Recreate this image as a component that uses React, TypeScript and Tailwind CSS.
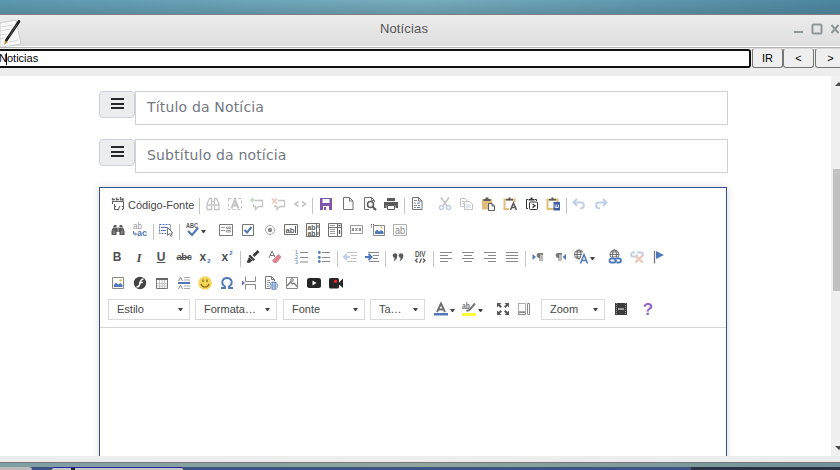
import type { ReactNode } from 'react';

const D = '#5a5a5a';
const B = '#5079b8';

type IconProps = { m: string; children: ReactNode; faded?: boolean };

function Ico({ m, children, faded }: IconProps) {
  return (
    <svg
      viewBox="0 0 16 16"
      fill="none"
      stroke={D}
      strokeWidth="1"
      className={`h-4 w-4 shrink-0 overflow-visible ${m} ${faded ? 'opacity-35' : ''}`}
    >
      {children}
    </svg>
  );
}

type LabelProps = { x: number; y: number; w: number; size: number; color?: string; bold?: boolean; children: string };

function Label({ x, y, w, size, color = D, bold, children }: LabelProps) {
  return (
    <text
      x={x}
      y={y}
      fontSize={size}
      fontWeight={bold ? 700 : 400}
      fill={color}
      stroke="none"
      textLength={w}
      lengthAdjust="spacingAndGlyphs"
      fontFamily="Liberation Sans"
    >
      {children}
    </text>
  );
}

function Glyph({ m, children }: { m: string; children: ReactNode }) {
  return (
    <span className={`flex h-4 w-4 shrink-0 items-center justify-center whitespace-nowrap leading-none text-[#505050] ${m}`}>
      {children}
    </span>
  );
}

function Sep({ m }: { m: string }) {
  return <span className={`mt-0.5 h-4 w-px shrink-0 bg-[#c4c4c4] ${m}`} />;
}

function Caret({ m }: { m: string }) {
  return (
    <span className={`mt-2 h-0 w-[5px] shrink-0 border-x-[2.5px] border-t-[3px] border-x-transparent border-t-[#444] ${m}`} />
  );
}

function Combo({ m, label }: { m: string; label: string }) {
  return (
    <div className={`flex h-[21px] shrink-0 items-center justify-between border border-[#d9d9d9] pr-[6px] pl-2 text-[11px] text-[#484848] ${m}`}>
      <span>{label}</span>
      <span className="h-0 w-[5px] border-x-[2.5px] border-t-[3px] border-x-transparent border-t-[#444]" />
    </div>
  );
}

function Binoculars() {
  return (
    <>
      <path d="M1.500 13V9L4 3h2.500v10zM14.500 13V9L12 3H9.500v10z" fill={D} stroke="none" />
      <path d="M6 5.500h4v4.500H6z" fill={D} stroke="none" />
      <path d="M4 8.500V12M12 8.500V12M8 6v4M3 5.500h10" stroke="#fff" strokeWidth=".5" />
    </>
  );
}

function Clipboard({ color }: { color: string }) {
  return (
    <>
      <path d="M2.500 3.500v9.500h10V3.500z" stroke={color} strokeWidth="2" />
      <path d="M4 4.500V3h2.500V1.500h2V3H11v1.500z" fill={D} stroke="none" />
    </>
  );
}

function Undo({ flip }: { flip?: boolean }) {
  return (
    <g transform={flip ? 'matrix(-1 0 0 1 16 0)' : undefined} stroke={B} strokeWidth="2">
      <path d="M3 6.500h7c4 0 4 6-1 6" />
      <path d="M6 3L2.500 6.500 6 10" />
    </g>
  );
}

function Globe() {
  return (
    <g strokeWidth=".9">
      <circle cx="6" cy="5.500" r="4.500" />
      <ellipse cx="6" cy="5.500" rx="2" ry="4.500" />
      <path d="M1.500 5.500h9M2.500 3h7M2.500 8h7" />
    </g>
  );
}

function Pilcrow() {
  return <path d="M8.500 4H13v1.500h-.500V12h-1V5.500h-1V12h-1V9C6 9 6 4 8.500 4z" fill="#777" stroke="none" />;
}

function RowSource() {
  return (
    <div className="mt-2 flex h-4">
      <Ico m="ml-[11px]">
        <path d="M1.500 5.500V8M3.500 8v5.500H7M12.500 5.500v7.500H11M1 5.500h11.500" stroke="#666" />
        <path d="M1 3.500h3M5 3.500h3M9 3.500h3M1.500 2v2.500M5.500 1.500v3M9.500 1v3.500M12 2v3" stroke="#666" strokeWidth="1.300" />
        <path d="M5 10l-2 2 2 2M11 10l2 2-2 2M9 10l-2 4.500" />
      </Ico>
      <span className="ml-px w-[66px] shrink-0 pt-px text-[11px] leading-4 tracking-[-0.03px] whitespace-nowrap text-[#484848]">Código-Fonte</span>
      <Sep m="ml-[5px]" />
      <Ico m="ml-[5px]" faded>
        <path d="M2 13.500V8l2.500-5.500h2v11zM9.500 13.500v-11h2L14 8v5.500zM6.500 5.500h3M6.500 9h3M2 9h4.500M9.500 9H14" strokeWidth="1.300" />
      </Ico>
      <Ico m="ml-1.5" faded>
        <path d="M1.500 2.500h13v11h-13z" strokeDasharray="3 2" />
        <path d="M4.500 12.500L8 4l3.500 8.500M5.500 9.500h5" strokeWidth="2" />
      </Ico>
      <Ico m="ml-1.5" faded>
        <path d="M6 4.500h7.500v6H9.500l-3 3v-3h-2V8" strokeWidth="1.300" />
        <path d="M3.500 1.500v5M1 4h5" stroke="#4c9a3b" strokeWidth="1.600" />
      </Ico>
      <Ico m="ml-[5px]" faded>
        <path d="M8 4.500h6.500v6H10l-3 3v-3H5V9" strokeWidth="1.300" />
        <path d="M2 2.500l5 5M7 2.500l-5 5" stroke="#d45b38" strokeWidth="1.600" />
      </Ico>
      <Ico m="ml-1.5" faded>
        <path d="M6.500 5.500L3 8l3.500 2.500M10 5.500L13.500 8 10 10.500" strokeWidth="1.800" />
      </Ico>
      <Sep m="ml-1" />
      <Ico m="ml-[5px]">
        <path d="M2 2h12v12H2z" fill="#7f55ad" stroke="none" />
        <path d="M4.500 3h7v4h-7zM5 10h6v4H5z" fill="#fff" stroke="none" />
        <path d="M6 11h2v3H6z" fill="#7f55ad" stroke="none" />
      </Ico>
      <Ico m="ml-1.5"><path d="M3.500 1.500h6l3.500 3.500v8.500H3.500zM9.500 1.500V5H13" stroke="#707070" /></Ico>
      <Ico m="ml-1.5">
        <path d="M12.500 6V4.500l-3-3h-7v12H7M9.500 1.500v3h3M11.500 13.500h1" stroke="#707070" />
        <circle cx="8.500" cy="8.500" r="3" strokeWidth="1.500" />
        <path d="M10.500 10.500l3.500 3.500" strokeWidth="2" />
      </Ico>
      <Ico m="ml-[5px]">
        <path d="M1 6h14v6h-2.500V9.500h-9V12H1zM4 2h8v3H4z" fill={D} stroke="none" />
        <path d="M4.500 9.500h7v4h-7z" fill="#fff" />
      </Ico>
      <Sep m="ml-[5px]" />
      <Ico m="ml-1">
        <path d="M3.500 1.500h6l3.500 3.500v8.500H3.500zM9.500 1.500V5H13" stroke="#707070" />
        <path d="M5 4.500h3M5 7h2M5 9.500h3M5 11.500h2M9 9.500h2" stroke="#888" />
        <path d="M8 7h3M8 11.500h3" stroke={B} />
      </Ico>
      <Ico m="ml-3" faded>
        <path d="M4 1.500l6.500 9M12 1.500l-6.500 9" strokeWidth="1.600" />
        <circle cx="4.500" cy="11.500" r="2" stroke={B} strokeWidth="1.600" />
        <circle cx="11.500" cy="11.500" r="2" stroke={B} strokeWidth="1.600" />
      </Ico>
      <Ico m="ml-[5px]" faded>
        <path d="M6 10.500H2.500v-8H7L9 5M6.500 5.500h5l3 2.500v5.500h-8zM4 5.500h2M4 7.500h2" />
        <path d="M8 9h5M8 11h5" stroke={B} />
      </Ico>
      <Ico m="ml-1.5">
        <path d="M2 3h10v10.500H2z" fill="#dfbd7b" stroke="none" />
        <path d="M3.500 5V3h2V1.500h3V3h2v2z" fill={D} stroke="none" />
        <path d="M8.500 7.500H12l2.500 2.500v4.500h-6z" fill="#fff" />
        <path d="M12 7.500V10h2.500" />
      </Ico>
      <Ico m="ml-1.5">
        <Clipboard color="#dfbd7b" />
        <path d="M7 6h8v9H7z" fill="#fff" stroke="none" />
        <path d="M8.500 14L11.500 7l3 7M9.500 11.500h4" strokeWidth="1.600" />
      </Ico>
      <Ico m="ml-1.500 ml-1.5">
        <path d="M4 12.500H2.500v-9H4M11 3.500h1.500V5" stroke="#333" />
        <rect x="5.500" y="6" width="8" height="7.500" rx="1" stroke="#333" />
        <path d="M4.500 4.500V3h2V1.500h2V3h2v1.500z" fill="#333" stroke="none" />
        <path d="M8.500 8l2.500 1.800-2.500 1.800" stroke="#333" strokeWidth="1.300" />
      </Ico>
      <Ico m="ml-[5px]">
        <Clipboard color="#dfbd7b" />
        <path d="M8.500 6H15v8.500H8.500z" fill="#3c5ea4" stroke="none" />
        <path d="M10 8.500v3h3.500v-3M11.700 8.500v3" stroke="#fff" strokeWidth=".8" />
      </Ico>
      <Sep m="ml-[5px]" />
      <Ico m="ml-1" faded><Undo /></Ico>
      <Ico m="ml-1.5" faded><Undo flip /></Ico>
    </div>
  );
}

function RowForms() {
  return (
    <div className="mt-2.5 flex h-4">
      <Ico m="ml-2.5"><Binoculars /></Ico>
      <Ico m="ml-1.5">
        <Label x={1} y={7} w={9} size={9} color="#999">ab</Label>
        <Label x={5} y={14} w={10} size={9} color="#5079b8" bold>ac</Label>
        <path d="M1.500 9v3H4M3 10.500l1.500 1.500L3 13.500" stroke={B} />
      </Ico>
      <Sep m="ml-[5px]" />
      <Ico m="ml-1">
        <path d="M1.500 2.500h11v9H1.500z" stroke={B} strokeDasharray="2 1" />
        <path d="M3 5.500h6M3 8.500h5" stroke={B} />
        <path d="M9.500 5.500v8l2-2 1.500 3 1-1-1-2.500h2z" fill="#fff" stroke="#777" />
      </Ico>
      <Sep m="ml-[5px]" />
      <Ico m="ml-[5px]">
        <Label x={1} y={6} w={12} size={7} bold>ABC</Label>
        <path d="M3 9l4 4 6-7" stroke={B} strokeWidth="2.200" />
      </Ico>
      <Caret m="" />
      <Ico m="ml-3">
        <path d="M1.500 2.500h13v11h-13z" stroke="#777" />
        <path d="M3 5.500h4M3 8.500h4M8.500 5h4v1.500h-4zM8.500 8.500h4V10h-4z" stroke="#999" />
      </Ico>
      <Ico m="ml-1.5">
        <path d="M2.500 2.500h11v11h-11z" stroke="#777" />
        <path d="M4.500 8l2.500 2.500 4.500-5.500" stroke={B} strokeWidth="2" />
      </Ico>
      <Ico m="ml-1.5">
        <circle cx="8" cy="8" r="4.500" stroke="#aaa" />
        <circle cx="8" cy="8" r="2.200" fill="#888" stroke="none" />
      </Ico>
      <Ico m="ml-[5px]">
        <path d="M1.500 2.500h13v10h-13z" stroke="#707070" />
        <Label x={2.5} y={10.5} w={9} size={8} bold>ab</Label>
        <path d="M12.500 4v7" />
      </Ico>
      <Ico m="ml-1.5">
        <path d="M1.500 1.500h13v13h-13zM11.500 2v12" stroke="#707070" />
        <Label x={2.5} y={7.5} w={8} size={7} bold>ab</Label>
        <Label x={2.5} y={13.5} w={8} size={7} bold>ab</Label>
        <path d="M13 3v3M13 10v3" />
      </Ico>
      <Ico m="ml-1.5">
        <path d="M1.500 1.500h13v13h-13zM1.500 5.500h13M10.500 2v12" stroke="#707070" />
        <path d="M3 3.500h5M3 7.500h5M3 9.500h5M3 11.500h5" stroke="#999" />
        <path d="M11.500 3.500h2M12.500 8v4" strokeWidth="1.300" />
      </Ico>
      <Ico m="ml-[5px]">
        <path d="M2.500 3.500h12v8h-12z" stroke="#999" />
        <path d="M4 6l2 3M6 6l-2 3M7.500 6l2 3M9.500 6l-2 3M11 6l2 3M13 6l-2 3" stroke="#777" />
      </Ico>
      <Ico m="ml-1.5">
        <path d="M3.500 3.500h11v10h-11z" stroke="#888" />
        <path d="M1 2.500h4M1.500 5.500v-3" strokeDasharray="1 1" />
        <path d="M5 12V9.500l2-2 2 2L11.500 8l2 2v2z" fill={B} stroke="none" />
        <circle cx="11.500" cy="5.500" r="1" fill="#e4b363" stroke="none" />
      </Ico>
      <Ico m="ml-1.5">
        <path d="M1.500 2.500h13v11h-13z" stroke="#b0b0b0" />
        <Label x={3} y={11.5} w={10} size={10} color="#888">ab</Label>
      </Ico>
    </div>
  );
}

function RowText() {
  return (
    <div className="mt-[11px] flex h-4">
      <Glyph m="ml-[9px]"><b className="text-[12px]">B</b></Glyph>
      <Glyph m="ml-1.5"><i className="font-['Liberation_Serif'] text-[13px] font-bold">I</i></Glyph>
      <Glyph m="ml-1.5"><b className="text-[12px] underline">U</b></Glyph>
      <Glyph m="ml-[7px]"><span className="text-[9.5px] font-semibold tracking-[-.5px] line-through">abc</span></Glyph>
      <Glyph m="ml-[5px]"><b className="text-[12px]">x</b><b className="mt-2 ml-px text-[6px] text-[#4a74b8]">2</b></Glyph>
      <Glyph m="ml-1.5"><b className="text-[12px]">x</b><b className="mb-2 ml-px text-[6px] text-[#4a74b8]">2</b></Glyph>
      <Sep m="ml-[5px]" />
      <Ico m="ml-1">
        <path d="M13.500 2l-5 5" strokeWidth="2.800" stroke="#3c3c3c" />
        <path d="M5 5.500l5 5L8.500 12l-5-5z" fill="#3c3c3c" stroke="none" />
        <path d="M4 8l3.500 3.500-3 2.500-3-.500z" fill="#3c3c3c" stroke="none" />
      </Ico>
      <Ico m="ml-1.5">
        <path d="M2 9l3-7 3 6M3 6.500h4" stroke="#777" />
        <path d="M11.500 5l3 3-5 6H7l-2-2.500z" fill="#dc8493" stroke="none" />
      </Ico>
      <Ico m="ml-[11px]">
        <path d="M6 3.500h8M6 8.500h8M6 13h8" stroke="#888" />
        <Label x={1} y={5} w={3} size={6} color={B}>1</Label>
        <Label x={1} y={10} w={3} size={6} color={B}>2</Label>
        <Label x={1} y={15} w={3} size={6} color={B}>3</Label>
      </Ico>
      <Ico m="ml-1.5">
        <path d="M6 3.500h8M6 8.500h8M6 12.500h8" stroke="#888" />
        <g fill={B} stroke="none">
          <circle cx="3.300" cy="3.500" r="1.400" /><circle cx="3.300" cy="8.500" r="1.400" /><circle cx="3.300" cy="12.500" r="1.400" />
        </g>
      </Ico>
      <Sep m="ml-[5px]" />
      <Ico m="ml-1" faded>
        <path d="M5 3.500h10M9 6.500h6M9 9.500h5M5 12.500h10" />
        <path d="M2 8h6M5 5L2 8l3 3" stroke={B} strokeWidth="2" />
      </Ico>
      <Ico m="ml-1.5">
        <path d="M4 3.500h11M9 6.500h6M9 9.500h5M5 12.500h10" stroke="#888" />
        <path d="M1 8h6M4.500 5l3 3-3 3" stroke={B} strokeWidth="2" />
      </Ico>
      <Sep m="ml-[5px]" />
      <Ico m="ml-1">
        <g fill={D} stroke="none">
          <circle cx="5" cy="6.500" r="2.300" /><circle cx="11" cy="6.500" r="2.300" />
          <path d="M7.300 6.500c0 3-1.500 5-4 6 1-1.500 1.500-2.500 1-4zM13.300 6.500c0 3-1.500 5-4 6 1-1.500 1.500-2.500 1-4z" />
        </g>
      </Ico>
      <Ico m="ml-1.5">
        <Label x={3} y={8} w={10.5} size={8.5} bold>DIV</Label>
        <path d="M5.500 9.500L3.500 11.500l2 2M11 9.500l2 2-2 2M9.500 9.500L7.500 14" strokeWidth="1.300" />
      </Ico>
      <Sep m="ml-[5px]" />
      <Ico m="ml-1"><path d="M2 3.500h12M2 6.500h8M2 9.500h12M2 12.500h8" stroke="#888" /></Ico>
      <Ico m="ml-1.5"><path d="M2 3.500h12M4 6.500h8M2 9.500h12M4 12.500h8" stroke="#888" /></Ico>
      <Ico m="ml-1.5"><path d="M2 3.500h12M6 6.500h8M2 9.500h12M6 12.500h8" stroke="#888" /></Ico>
      <Ico m="ml-1.5"><path d="M2 3.500h12M2 6.500h12M2 9.500h12M2 12.500h12" stroke="#888" /></Ico>
      <Sep m="ml-[5px]" />
      <Ico m="ml-1">
        <Pilcrow />
        <path d="M2.500 5v6L6 8z" fill={B} stroke="none" />
      </Ico>
      <Ico m="ml-1.5">
        <g transform="translate(-3 0)"><Pilcrow /></g>
        <path d="M14 5v6l-3.500-3z" fill={B} stroke="none" />
      </Ico>
      <Ico m="ml-[5px]">
        <Globe />
        <path d="M7 14.500l3.500-9 3.500 9M8.500 11.500h4.500" stroke="#fff" strokeWidth="3" />
        <path d="M7.500 14.500l3.500-9 3.500 9M8.500 11.500h5" stroke={B} strokeWidth="1.500" />
      </Ico>
      <Caret m="ml-px" />
      <Ico m="ml-3">
        <g transform="translate(1.500 0)"><Globe /></g>
        <path d="M1 8.500h14V15H1z" fill="#fff" stroke="none" />
        <g stroke={B} strokeWidth="1.800">
          <path d="M7.500 9.500H4.500a2 2 0 000 4H7c2 0 2-2.500 2-2.500M9.500 13.500h2.500a2 2 0 000-4H9.500C8 9.500 7.500 11.500 7.500 11.500" />
        </g>
      </Ico>
      <Ico m="ml-1.5" faded>
        <path d="M6 3.500H4a2 2 0 000 4h2.500c2 0 1.500-2 1.500-2M8 3.500h4a2 2 0 010 4" stroke={B} strokeWidth="1.800" />
        <path d="M6.500 6.500l7 7M13.500 6.500l-7 7" stroke="#d45b38" strokeWidth="2.200" />
      </Ico>
      <Ico m="ml-1.5">
        <path d="M3.500 2v12.500" stroke="#777" strokeWidth="1.300" />
        <path d="M5 2l8 4-8 4z" fill={B} stroke="none" />
      </Ico>
    </div>
  );
}

function RowInsert() {
  return (
    <div className="mt-2.5 flex h-4">
      <Ico m="ml-2.5">
        <path d="M2.500 2.500h11v11h-11z" stroke="#888" />
        <path d="M4 12V9.500l2-2 2 2L10.500 8l2 2v2z" fill={B} stroke="none" />
        <circle cx="10.500" cy="5.500" r="1.200" fill="#e4b363" stroke="none" />
      </Ico>
      <Ico m="ml-1.5">
        <circle cx="8" cy="8" r="6.200" fill="#444" stroke="none" />
        <path d="M11.500 4C8 4 8.500 8 7.500 10c-.500 1.500-1.500 2-3 2M7 7.500h4" stroke="#fff" strokeWidth="1.600" />
      </Ico>
      <Ico m="ml-1.5">
        <path d="M3 8.500h10M3 11h10M5.500 5v8.500M8 5v8.500M10.500 5v8.500" stroke="#c4c4c4" />
        <path d="M2.500 3.500h11v10h-11z" stroke="#777" />
        <path d="M2 4h12" stroke="#666" strokeWidth="2" />
      </Ico>
      <Ico m="ml-1.5">
        <path d="M2.500 6L4.500 2l2 4M2.500 14l2-4 2 4" stroke="#888" />
        <path d="M8 2.500h6M8 5h6M8 11h6M8 13.500h6" stroke="#aaa" />
        <path d="M2 8h12" stroke={B} strokeWidth="2" />
      </Ico>
      <Ico m="ml-[5px]">
        <circle cx="8" cy="8" r="6.800" fill="#f5d65a" stroke="none" />
        <path d="M6 4.500v2.500M10 4.500v2.500" stroke="#8a6d22" strokeWidth="1.400" />
        <path d="M4 9c1 4 7 4 8 0" stroke="#8a6d22" strokeWidth="1.200" />
      </Ico>
      <Ico m="ml-1.5">
        <path d="M2 13h4v-1.500C1.500 9 3 3 8 3s6.500 6 2 8.500V13h4" stroke={B} strokeWidth="1.900" />
      </Ico>
      <Ico m="ml-1.5">
        <path d="M4.500 1.500v5h10v-5M4.500 14.500v-5h10v5" stroke="#888" />
        <path d="M1 5.500v5L4 8z" fill={B} stroke="none" />
      </Ico>
      <Ico m="ml-1.5">
        <path d="M7 13.500H2.500v-12h6l3 3V6M8.500 1.500v3h3" stroke="#777" />
        <path d="M4 5.500h3M4 7.500h3M4 9.500h2M4 11.500h2" stroke="#999" />
        <circle cx="10.800" cy="10.800" r="4.200" fill={B} stroke="none" />
        <path d="M6.500 11h8.500M10.800 6.500V15M8.500 8c-1 2-1 4 0 5.500M13 8c1 2 1 4 0 5.500M8 9h6M8 13h6" stroke="#fff" strokeWidth=".6" />
      </Ico>
      <Ico m="ml-[5px]">
        <path d="M2.500 2.500h11v11h-11z" stroke="#888" />
        <path d="M3 11l3.500-4L8.500 9 10 8l3 3.500" stroke="#777" strokeWidth="1.300" />
        <circle cx="8" cy="5" r="1.300" stroke="#777" />
      </Ico>
      <Ico m="ml-1.5">
        <rect x="1" y="3" width="14" height="10" rx="2.500" fill="#252525" stroke="none" />
        <path d="M6.500 5.500v5L10.500 8z" fill="#fff" stroke="none" />
      </Ico>
      <Ico m="ml-1.5">
        <rect x="1" y="3" width="10" height="10.500" rx="1.500" fill="#252525" stroke="none" />
        <path d="M11 7.500L15 3.500v9.500l-4-3.500z" fill="#252525" stroke="none" />
        <circle cx="7.500" cy="6.300" r="1.800" fill="#e2252b" stroke="none" />
      </Ico>
    </div>
  );
}

function RowStyles() {
  return (
    <div className="mt-2 flex h-[21px]">
      <Combo m="ml-2 w-[82px]" label="Estilo" />
      <Combo m="ml-[5px] w-[82px]" label="Formata…" />
      <Combo m="ml-1.5 w-[82px]" label="Fonte" />
      <Combo m="ml-[5px] w-[55px]" label="Ta…" />
      <div className="flex pt-0.5">
        <Ico m="ml-2">
          <path d="M4 11L8 2.500l4 8.500M5.500 8.500h5" stroke="#707070" strokeWidth="1.900" />
          <path d="M1 12h14v2.500H1z" fill={B} stroke="none" />
        </Ico>
        <Caret m="ml-px" />
        <Ico m="ml-1.5">
          <Label x={1} y={8} w={8} size={8.5} bold color="#707070">ab</Label>
          <path d="M14 2.500L8.500 9l-3 1" strokeWidth="2" stroke="#777" />
          <path d="M1 12h14v3H1z" fill="#fdfb3c" stroke="none" />
        </Ico>
        <Caret m="ml-px" />
        <Ico m="ml-3">
          <path d="M2 2h4.500L5 3.500l2 2L5.500 7l-2-2L2 6.500zM14 2H9.500L11 3.500l-2 2L10.500 7l2-2L14 6.500zM2 14h4.500L5 12.500l2-2L5.500 9l-2 2L2 9.500zM14 14H9.500l1.500-1.500-2-2L10.500 9l2 2L14 9.500z" fill={D} stroke="none" />
        </Ico>
        <Ico m="ml-[5px]">
          <path d="M2.500 2.500h7v8h-7z" strokeDasharray="1 1" />
          <path d="M2.500 11.500h7v2h-7zM11.500 2.500h2v11h-2z" stroke="#888" />
        </Ico>
      </div>
      <Combo m="ml-[9px] w-[64px]" label="Zoom" />
      <div className="flex pt-0.5">
        <Ico m="ml-2">
          <path d="M2 2h12v12H2z" fill="#3c3c3c" stroke="none" />
          <path d="M3.500 2v12M12.500 2v12" stroke="#999" strokeDasharray="1 1" />
          <path d="M5 8h6" stroke="#fff" />
        </Ico>
        <Glyph m="ml-[11px]"><b className="text-[17px] text-[#8f68c0]">?</b></Glyph>
      </div>
    </div>
  );
}

function Field({ label }: { label: string }) {
  return (
    <div className="flex h-[34px] items-start">
      <div className="flex h-[27px] w-9 justify-center rounded-[4px] border border-[#ced0da] bg-[#ebedef] pt-1.5">
        <div className="flex h-[11px] w-[13px] flex-col justify-between">
          <span className="h-0.5 bg-[#23282c]" />
          <span className="h-0.5 bg-[#23282c]" />
          <span className="h-0.5 bg-[#23282c]" />
        </div>
      </div>
      <div className="flex h-[34px] w-[593px] items-center border border-[#ced0d6] bg-white pb-0.5 pl-[11px] font-['DejaVu_Sans',sans-serif] text-[14px] tracking-[.17px] text-[#73787f]">
        {label}
      </div>
    </div>
  );
}

function TitleBar() {
  return (
    <div className="flex h-8 items-center border-t border-[#837f80] bg-gradient-to-b from-[#ececec] to-[#dedede]">
      <svg viewBox="0 0 24 30" className="mt-1 h-[30px] w-6">
        <path d="M0 5l16-3 5 24-19 3H0z" fill="#f7f7f7" stroke="#bbb" strokeWidth=".6" />
        <path d="M0 9l13-2M0 13l10-2M0 17l7-1M0 21l4-1M9 24l9-2" stroke="#ccc" strokeWidth=".7" />
        <path d="M4 27l1-5 3 2z" fill="#bd9544" />
        <path d="M6.500 22L19 3.500" stroke="#1e1e1e" strokeWidth="2.800" strokeLinecap="round" />
        <path d="M9 18.500l8-12" stroke="#777" strokeWidth=".6" />
      </svg>
      <div className="-mt-1 w-[760px] text-center text-[13px] tracking-[.14px] text-[#555]">Notícias</div>
      <svg viewBox="0 0 48 16" className="-mt-1 ml-2 h-4 w-12 shrink-0" fill="none" stroke="#8d979b" strokeWidth="2">
        <path d="M2 11h9M39.500 4l7 8M46.500 4l-7 8" />
        <rect x="20.500" y="3.500" width="9" height="9" rx="1" />
      </svg>
    </div>
  );
}

function NavButton({ m, label }: { m: string; label: string }) {
  return (
    <div className={`flex h-5 w-[31px] shrink-0 items-center justify-center rounded-[3px] border border-[#767676] border-t-[#d8d8d8] bg-[#efefef] text-[11px] text-black ${m}`}>
      {label}
    </div>
  );
}

export default function App() {
  return (
    <div className="flex h-[470px] w-[840px] flex-col overflow-hidden bg-white font-['Liberation_Sans',sans-serif]">
      <div className="h-3.5 shrink-0 bg-gradient-to-r from-[#5c99b1] via-[#78adbf] to-[#4c86a1]">
        <div className="h-full bg-gradient-to-b from-transparent to-[#40606a]/30" />
      </div>
      <div className="h-[33px] shrink-0"><TitleBar /></div>
      <div className="flex h-[29px] shrink-0 border-t border-[#b4b4b4] bg-[#ededed]">
        <div className="mt-px flex h-[19px] w-[751px] shrink-0 items-center rounded-r-[3px] border-2 border-l-0 border-[#101010] bg-white text-[11px] text-black">
          <span className="-ml-px">N</span>
          <span className="-ml-px h-3 w-px bg-black" />
          <span>oticias</span>
        </div>
        <NavButton m="ml-px" label="IR" />
        <NavButton m="" label="<" />
        <NavButton m="ml-px" label=">" />
      </div>
      <div className="flex h-[380px] shrink-0 overflow-hidden">
        <div className="flex w-[831px] shrink-0 flex-col pt-[15px] pl-[99px]">
          <Field label="Título da Notícia" />
          <div className="h-3.5 shrink-0" />
          <Field label="Subtítulo da notícia" />
          <div className="mt-3.5 h-[300px] w-[628px] shrink-0 border border-[#36518f] bg-white shadow-[0_0_8px_rgba(0,0,0,0.15)]">
            <div className="flex h-[140px] flex-col border-b border-[#d5d5d5]">
              <RowSource />
              <RowForms />
              <RowText />
              <RowInsert />
              <RowStyles />
            </div>
          </div>
        </div>
        <div className="flex w-[9px] shrink-0 flex-col bg-[#f0f0f0]">
          <div className="mt-1.5 ml-1 h-1 w-0 border-x-[4px] border-b-[4px] border-x-transparent border-b-[#4d4d4d]" />
          <div className="mt-[83px] ml-0.5 h-[122px] shrink-0 bg-[#c1c1c1]" />
          <div className="mt-auto mb-1.5 ml-1 h-1 w-0 border-x-[4px] border-t-[4px] border-x-transparent border-t-[#4d4d4d]" />
        </div>
      </div>
      <div className="h-1.5 shrink-0 bg-[#ededed]" />
      <div className="h-[5px] shrink-0 border-t border-[#777] bg-gradient-to-r from-[#7f9ea2] via-[#91a59d] to-[#729298]" />
      <div className="flex h-[3px] shrink-0 bg-[#3c5583]">
        <div className="w-8 rounded-tr-full bg-[#bbb]" />
        <div className="ml-5 w-[131px] rounded-t-[2px] border-t border-[#2525a8] bg-[#c9c5c5] pl-[19px]">
          <div className="h-0.5 w-1 bg-[#222]" />
        </div>
        <div className="ml-auto w-[149px] bg-[#293344]" />
      </div>
    </div>
  );
}
